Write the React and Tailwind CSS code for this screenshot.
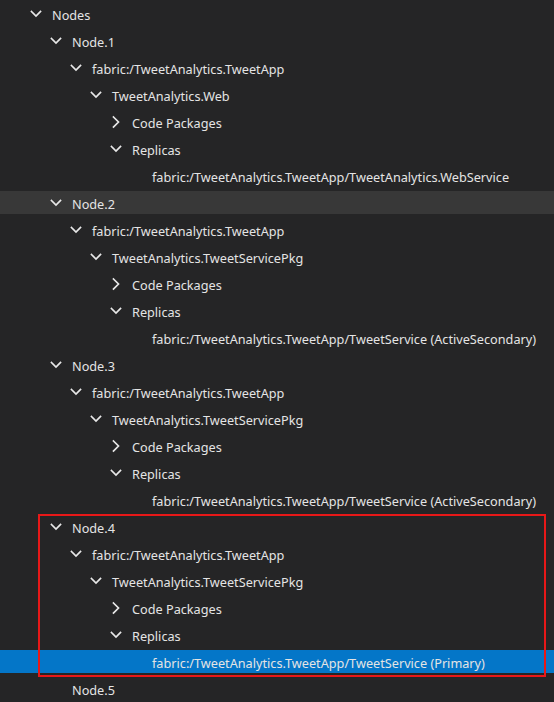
import React from "react";

const rows = [
  { level: 0, label: "Nodes", state: "open" },
  { level: 1, label: "Node.1", state: "open" },
  { level: 2, label: "fabric:/TweetAnalytics.TweetApp", state: "open" },
  { level: 3, label: "TweetAnalytics.Web", state: "open" },
  { level: 4, label: "Code Packages", state: "closed" },
  { level: 4, label: "Replicas", state: "open" },
  { level: 5, label: "fabric:/TweetAnalytics.TweetApp/TweetAnalytics.WebService", state: "leaf" },
  { level: 1, label: "Node.2", state: "open", hover: true },
  { level: 2, label: "fabric:/TweetAnalytics.TweetApp", state: "open" },
  { level: 3, label: "TweetAnalytics.TweetServicePkg", state: "open" },
  { level: 4, label: "Code Packages", state: "closed" },
  { level: 4, label: "Replicas", state: "open" },
  { level: 5, label: "fabric:/TweetAnalytics.TweetApp/TweetService (ActiveSecondary)", state: "leaf" },
  { level: 1, label: "Node.3", state: "open" },
  { level: 2, label: "fabric:/TweetAnalytics.TweetApp", state: "open" },
  { level: 3, label: "TweetAnalytics.TweetServicePkg", state: "open" },
  { level: 4, label: "Code Packages", state: "closed" },
  { level: 4, label: "Replicas", state: "open" },
  { level: 5, label: "fabric:/TweetAnalytics.TweetApp/TweetService (ActiveSecondary)", state: "leaf" },
  { level: 1, label: "Node.4", state: "open" },
  { level: 2, label: "fabric:/TweetAnalytics.TweetApp", state: "open" },
  { level: 3, label: "TweetAnalytics.TweetServicePkg", state: "open" },
  { level: 4, label: "Code Packages", state: "closed" },
  { level: 4, label: "Replicas", state: "open" },
  { level: 5, label: "fabric:/TweetAnalytics.TweetApp/TweetService (Primary)", state: "leaf", selected: true },
  { level: 1, label: "Node.5", state: "leaf" },
];

function Chevron({ open }) {
  return (
    <svg width="16" height="16" viewBox="0 0 16 16" fill="none" className="shrink-0">
      {open ? (
        <polyline points="3.5,5.5 8,10 12.5,5.5" stroke="#e8e8e8" strokeWidth="1.7" strokeLinecap="square" />
      ) : (
        <polyline points="5.5,3 10.5,8 5.5,13" stroke="#e8e8e8" strokeWidth="1.7" strokeLinecap="square" />
      )}
    </svg>
  );
}

export default function App() {
  return (
    <div
      className="relative w-[554px] h-[702px] overflow-hidden bg-[#252526] text-[#e4e4e4] text-[12.7px]"
      style={{ fontFamily: '"Noto Sans", "Open Sans", sans-serif' }}
    >
      {rows.map((row, i) => {
        const bg = row.selected ? "bg-[#0476c8]" : row.hover ? "bg-[#383838]" : "";
        return (
          <div key={i} className="h-[27px] py-[2px]">
            <div className={`h-[23px] flex items-center whitespace-nowrap ${bg}`}>
              <div style={{ width: 28 + row.level * 20 }} className="shrink-0" />
              {row.state === "leaf" ? (
                <div className="w-4 shrink-0" />
              ) : (
                <Chevron open={row.state === "open"} />
              )}
              <span className="ml-2 pt-[3px] leading-none">{row.label}</span>
            </div>
          </div>
        );
      })}
      {/* annotation box around Node.4 */}
      <div className="absolute left-[38px] top-[514px] w-[508px] h-[163px] border-2 border-[#e81818] pointer-events-none" />
    </div>
  );
}
